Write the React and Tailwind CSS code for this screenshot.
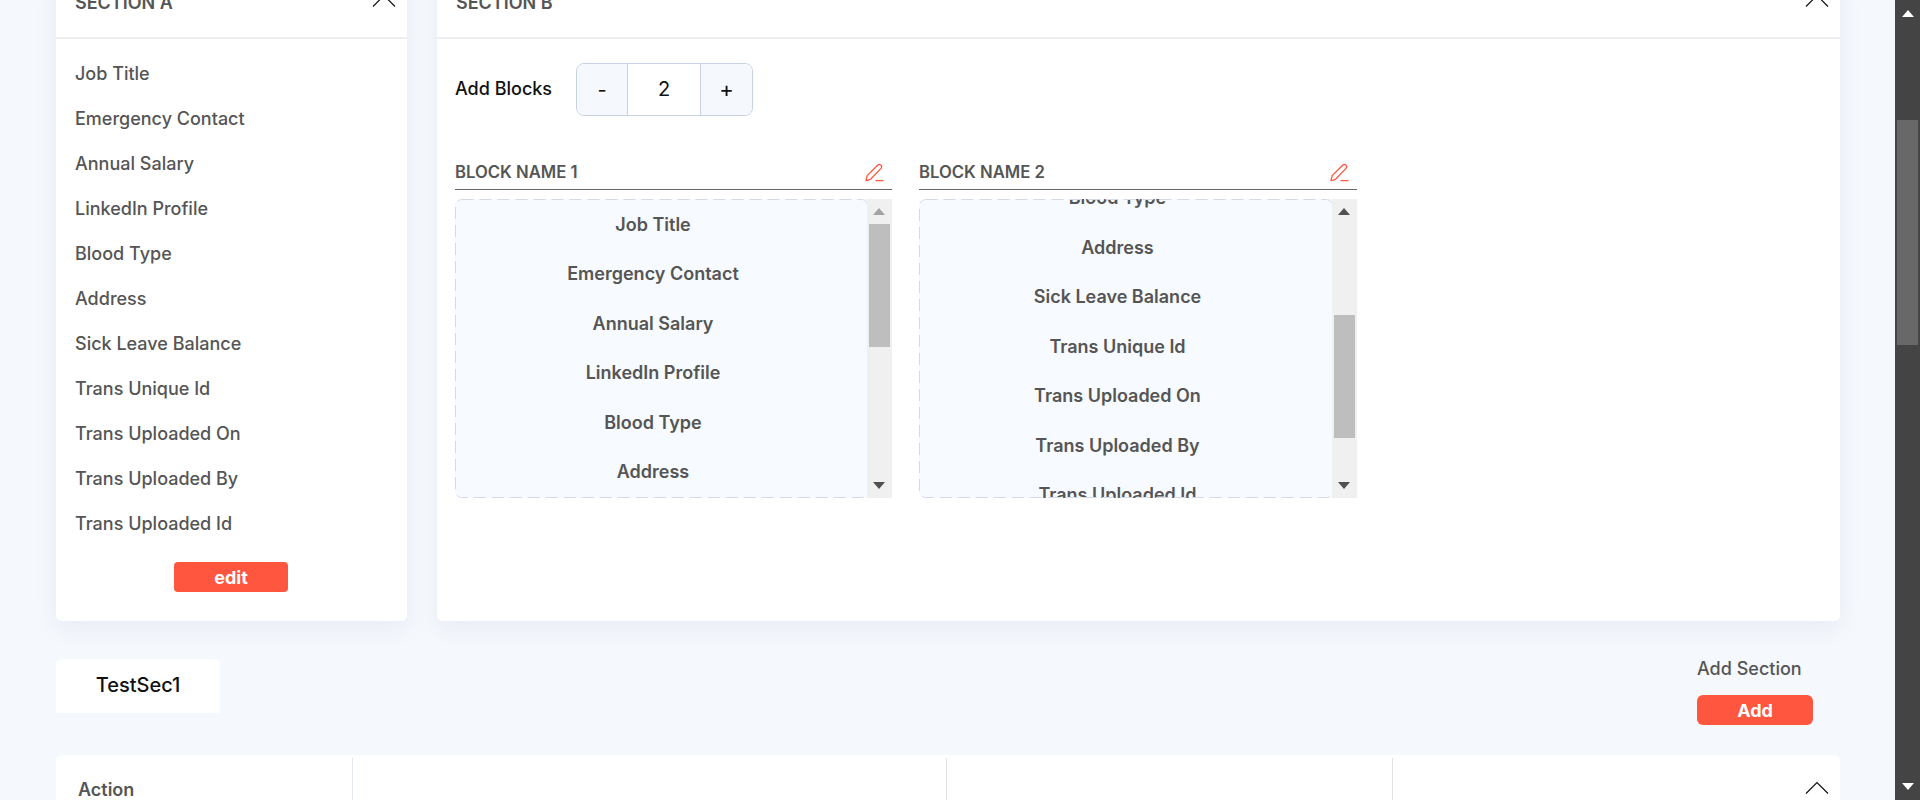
import React from 'react';

const fields = [
	'Job Title',
	'Emergency Contact',
	'Annual Salary',
	'LinkedIn Profile',
	'Blood Type',
	'Address',
	'Sick Leave Balance',
	'Trans Unique Id',
	'Trans Uploaded On',
	'Trans Uploaded By',
	'Trans Uploaded Id',
];

function ChevronUp({ className }) {
	return (
		<svg width="24" height="13" viewBox="0 0 24 13" fill="none" className={className}>
			<path d="M1 12.5 L12 1.5 L23 12.5" stroke="#111" strokeWidth="1.2" />
		</svg>
	);
}

function Pencil() {
	return (
		<svg width="19" height="19" viewBox="0 0 19 19" fill="none" stroke="#ff5640" strokeWidth="1.3" strokeLinejoin="round">
			<path d="M1 17.6 L2.2 12.6 L12.6 2.2 Q14.3 .6 16 2.2 Q17.4 3.8 16 5.4 L5.8 16 Q3.5 17.5 1 17.6 Z" />
			<path d="M10.5 17.6 H18.5" />
		</svg>
	);
}

function Arrow({ down, color, className }) {
	return (
		<svg width="12" height="7" viewBox="0 0 12 7" className={className}>
			<polygon points={down ? '0,0 12,0 6,7' : '6,0 12,7 0,7'} fill={color} />
		</svg>
	);
}

function ListScrollbar({ upColor, thumbClass }) {
	return (
		<div className="w-[25px] shrink-0 bg-[#f0f0f0] flex flex-col items-center">
			<Arrow color={upColor} className="mt-[9px] shrink-0 -translate-x-[1px]" />
			<div className={`w-[21px] shrink-0 bg-[#bebebe] ${thumbClass}`} />
			<Arrow down color="#505050" className="mt-auto mb-[9px] shrink-0 -translate-x-[1px]" />
		</div>
	);
}

function Block({ name, listClass, widthClass, upColor, thumbClass }) {
	return (
		<div className={widthClass}>
			<div className="h-[35px] flex items-center justify-between border-b border-[#666] pr-[8px]">
				<span className="pt-[2px] text-[16.7px] font-semibold text-[#555]">{name}</span>
				<Pencil />
			</div>
			<div className="mt-[9px] h-[299px] flex">
				<div className="relative flex-1 overflow-hidden bg-[#f7fafe] rounded-l-[6px] pr-4">
					<div className={listClass}>
						{fields.map((f) => (
							<div key={f} className="h-[49.5px] flex items-center justify-center text-[18px] font-semibold text-[#555]">
								{f}
							</div>
						))}
					</div>
					{/* long dashes, border-dashed draws them too short */}
					<svg className="absolute inset-0 w-full h-full" fill="none">
						<rect x="0.5" y="0.5" width="100%" height="298" rx="6" stroke="#d3d9e8" strokeDasharray="12 6" />
					</svg>
				</div>
				<ListScrollbar upColor={upColor} thumbClass={thumbClass} />
			</div>
		</div>
	);
}

export default function App() {
	return (
		<div className="h-[800px] overflow-hidden flex bg-[#f5f8fd] font-['Inter',sans-serif]">
			<main className="flex-1 min-w-0 pl-14 pr-[55px] -mt-[30px]">
				<div className="flex gap-[30px]">
					<section className="w-[351px] h-[651px] bg-white rounded-md shadow-[0_8px_24px_rgba(30,50,90,0.06)] flex flex-col">
						<div className="h-[69px] shrink-0 border-b-2 border-[#eceef2] pl-[19px] pr-[11px] pt-[21px] flex justify-between items-start">
							<span className="text-[18px] leading-[24px] font-semibold text-[#555]">SECTION A</span>
							<ChevronUp className="mt-[3px]" />
						</div>
						<div className="pt-[12px] pl-[19px]">
							{fields.map((f) => (
								<div key={f} className="h-[45px] flex items-center text-[18px] font-medium text-[#555]">
									{f}
								</div>
							))}
						</div>
						<button className="mt-[16px] ml-[118px] w-[114px] h-[30px] rounded bg-[#ff5640] text-white text-[18px] font-bold">
							edit
						</button>
					</section>

					<section className="flex-1 h-[651px] bg-white rounded-md shadow-[0_8px_24px_rgba(30,50,90,0.06)]">
						<div className="h-[69px] border-b-2 border-[#eceef2] pl-[19px] pr-[11px] pt-[21px] flex justify-between items-start">
							<span className="text-[18px] leading-[24px] font-semibold text-[#555]">SECTION B</span>
							<ChevronUp className="mt-[3px]" />
						</div>
						<div className="pl-[18px]">
							<div className="mt-6 flex items-center">
								<span className="w-[121px] pb-[2px] text-[18px] font-medium text-[#111]">Add Blocks</span>
								<div className="w-[177px] h-[53px] flex border border-[#c6d1e2] rounded-lg overflow-hidden text-[#111]">
									<div className="w-[50px] bg-[#f5f8fd] flex items-center justify-center text-[20px]">-</div>
									<div className="flex-1 bg-white border-x border-[#c6d1e2] pb-[2px] flex items-center justify-center text-[20px]">2</div>
									<div className="w-[51px] bg-[#f5f8fd] flex items-center justify-center text-[22px]">+</div>
								</div>
							</div>
							<div className="mt-[39px] flex gap-[27px]">
								<Block name="BLOCK NAME 1" widthClass="w-[437px]" listClass="pt-[0.5px]" upColor="#a3a3a3" thumbClass="mt-[9px] h-[123px]" />
								<Block name="BLOCK NAME 2" widthClass="w-[438px]" listClass="-mt-[224px]" upColor="#505050" thumbClass="mt-[100px] h-[123px]" />
							</div>
						</div>
					</section>
				</div>

				<div className="mt-[38px] h-[96px] flex justify-between items-start">
					<div className="w-[164px] h-[54px] bg-white rounded-t-md flex items-center justify-center text-[20px] font-medium text-[#111] pb-[3px]">
						TestSec1
					</div>
					<div className="w-[116px] mr-[27px]">
						<div className="h-[24px] -mt-[2px] text-[18px] leading-[24px] font-medium text-[#555]">Add Section</div>
						<button className="mt-[14px] w-[116px] h-[30px] rounded-md bg-[#ff5640] text-white text-[18px] font-bold">Add</button>
					</div>
				</div>

				<section className="h-[200px] bg-white rounded-md pt-[3px] flex items-start">
					<div className="w-[297px] h-full border-r border-[#e3e8f2] pl-[22px] pt-[20px] text-[18px] leading-[24px] font-semibold text-[#555]">Action</div>
					<div className="w-[594px] h-full border-r border-[#e3e3e3]" />
					<div className="w-[446px] h-full border-r border-[#e3e3e3]" />
					<div className="flex-1 flex justify-end pr-[11px] pt-[23px]">
						<ChevronUp />
					</div>
				</section>
			</main>

			<div className="w-[25px] shrink-0 bg-[#444] flex flex-col items-center">
				<Arrow color="#fff" className="mt-[10px] shrink-0" />
				<div className="w-[21px] h-[225px] mt-[103px] shrink-0 bg-[#686868]" />
				<Arrow down color="#fff" className="mt-auto mb-[10px] shrink-0" />
			</div>
		</div>
	);
}
